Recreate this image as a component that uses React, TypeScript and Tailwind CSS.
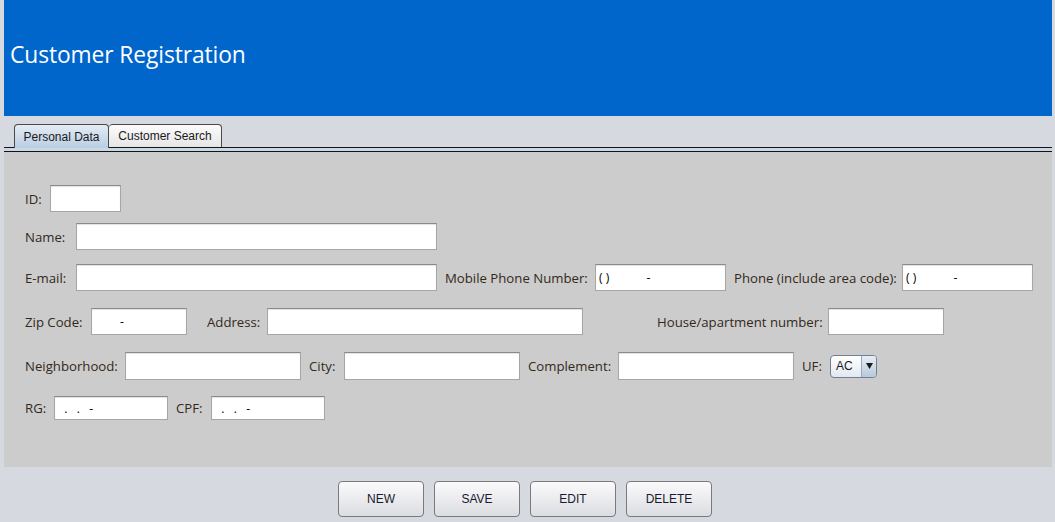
import { memo } from "react";

const Field = ({ w, value = "", h = "h-[27px]" }: { w: string; value?: string; h?: string }) => (
	<input
		readOnly
		defaultValue={value}
		className={`${w} ${h} bg-white border border-[#a6a6a6] border-t-[#8a8a8a] shadow-[inset_0_1px_1px_rgba(0,0,0,0.12)] px-[3px] text-[12px] text-black whitespace-pre outline-none font-['Open_Sans',sans-serif]`}
	/>
);

const Label = ({ children, className = "" }: { children: string; className?: string }) => (
	<span className={`text-[13.2px] text-[#33291a] whitespace-nowrap pt-[2px] ${className}`}>{children}</span>
);

const Button = ({ children }: { children: string }) => (
	<button
		type="button"
		className="w-[86px] h-[36px] rounded-[4px] border border-[#7a7a7a] bg-gradient-to-b from-[#fafafb] to-[#dcdde2] text-[12px] text-[#1a1a2e] font-['Liberation_Sans',Arial,sans-serif]"
	>
		{children}
	</button>
);

const App = () => {
	return (
		<div className="w-[1055px] h-[522px] overflow-hidden bg-[#d6d9e0] pl-[4px] pr-[3px] font-['Open_Sans',sans-serif]">
			{/* Header */}
			<div className="h-[116px] bg-[#0066cc] flex items-center pl-[6px] pb-[6px]">
				<h1 className="text-[22.8px] text-white font-['Open_Sans',sans-serif] font-normal tracking-[-0.1px]">
					Customer Registration
				</h1>
			</div>

			{/* Tabs */}
			<div className="pt-[8px]">
				<div className="flex items-end h-[23px] pl-[10px] font-['Liberation_Sans',Arial,sans-serif] text-[12px]">
					<div className="relative z-10 -mb-[1px] h-[24px] w-[95px] flex items-center justify-center rounded-t-[4px] border border-b-0 border-[#4a4a4a] bg-gradient-to-b from-[#e4ecf4] to-[#b9cde2] text-[#1a1a1a]">
						Personal Data
					</div>
					<div className="h-[23px] w-[113px] flex items-center justify-center rounded-t-[4px] border border-b-0 border-[#4a4a4a] border-l-0 bg-gradient-to-b from-[#fbfbfb] to-[#e6e6e8] text-[#1a1a1a]">
						Customer Search
					</div>
				</div>
				<div className="h-[5px] border-t border-b border-[#141414] bg-[#c9d7e6]" />
			</div>

			{/* Form panel */}
			<div className="h-[315px] bg-[#cccccc] pl-[21px] pt-[33px] flex flex-col">
				<div className="flex items-center">
					<Label className="w-[25px]">ID:</Label>
					<Field w="w-[71px]" />
				</div>

				<div className="flex items-center mt-[11px]">
					<Label className="w-[51px]">Name:</Label>
					<Field w="w-[361px]" />
				</div>

				<div className="flex items-center mt-[14px]">
					<Label className="w-[51px]">E-mail:</Label>
					<Field w="w-[361px]" />
					<Label className="ml-[8px] w-[150px]">Mobile Phone Number:</Label>
					<Field w="w-[131px]" value="( )            -" />
					<Label className="ml-[8px] w-[168px]">Phone (include area code):</Label>
					<Field w="w-[131px]" value="( )            -" />
				</div>

				<div className="flex items-center mt-[17px]">
					<Label className="w-[66px]">Zip Code:</Label>
					<Field w="w-[96px]" value="        -" />
					<Label className="ml-[20px] w-[60px]">Address:</Label>
					<Field w="w-[316px]" />
					<Label className="ml-[74px] w-[171px]">House/apartment number:</Label>
					<Field w="w-[116px]" />
				</div>

				<div className="flex items-center mt-[17px]">
					<Label className="w-[100px]">Neighborhood:</Label>
					<Field w="w-[176px]" h="h-[28px]" />
					<Label className="ml-[8px] w-[35px]">City:</Label>
					<Field w="w-[176px]" h="h-[28px]" />
					<Label className="ml-[8px] w-[90px]">Complement:</Label>
					<Field w="w-[176px]" h="h-[28px]" />
					<Label className="ml-[8px] w-[28px]">UF:</Label>
					<div className="w-[47px] h-[23px] rounded-[4px] border border-[#6f7f95] bg-gradient-to-b from-[#ffffff] to-[#e3e9f1] flex items-center pl-[5px] font-['Liberation_Sans',Arial,sans-serif] text-[12px] text-[#1a1a1a]">
						<span className="flex-1">AC</span>
						<span className="w-[15px] h-full border-l border-[#9aa8ba] bg-gradient-to-b from-[#e8eef5] to-[#b8c8db] flex items-center justify-center rounded-r-[3px]">
							<svg width="7" height="6" viewBox="0 0 7 6">
								<path d="M0 0h7L3.5 6z" fill="#1a1a1a" />
							</svg>
						</span>
					</div>
				</div>

				<div className="flex items-center mt-[16px]">
					<Label className="w-[29px]">RG:</Label>
					<Field w="w-[114px]" h="h-[24px]" value="  .   .   -" />
					<Label className="ml-[8px] w-[35px]">CPF:</Label>
					<Field w="w-[114px]" h="h-[24px]" value="  .   .   -" />
				</div>
			</div>

			{/* Actions */}
			<div className="flex justify-center gap-[10px] pt-[14px] pr-[6px]">
				<Button>NEW</Button>
				<Button>SAVE</Button>
				<Button>EDIT</Button>
				<Button>DELETE</Button>
			</div>
		</div>
	);
};

export default memo(App);
